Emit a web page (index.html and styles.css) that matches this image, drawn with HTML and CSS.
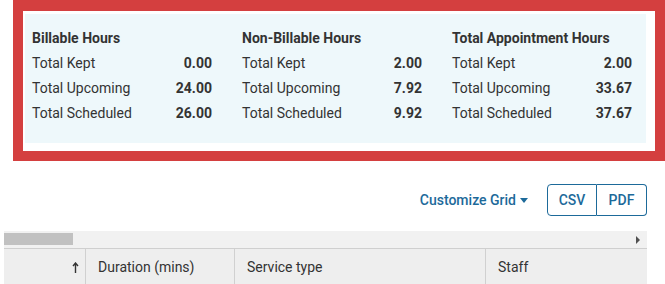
FILE: index.html
```html
<!DOCTYPE html>
<html>
<head>
<meta charset="utf-8">
<link rel="stylesheet" href="styles.css">
</head>
<body>
<div class="highlight">
  <div class="summary">
    <div class="col">
      <div class="head">Billable Hours</div>
      <div class="row"><span>Total Kept</span><b>0.00</b></div>
      <div class="row"><span>Total Upcoming</span><b>24.00</b></div>
      <div class="row"><span>Total Scheduled</span><b>26.00</b></div>
    </div>
    <div class="col">
      <div class="head">Non-Billable Hours</div>
      <div class="row"><span>Total Kept</span><b>2.00</b></div>
      <div class="row"><span>Total Upcoming</span><b>7.92</b></div>
      <div class="row"><span>Total Scheduled</span><b>9.92</b></div>
    </div>
    <div class="col">
      <div class="head">Total Appointment Hours</div>
      <div class="row"><span>Total Kept</span><b>2.00</b></div>
      <div class="row"><span>Total Upcoming</span><b>33.67</b></div>
      <div class="row"><span>Total Scheduled</span><b>37.67</b></div>
    </div>
  </div>
</div>
<div class="toolbar">
  <a class="customize">Customize Grid<span class="caret"></span></a>
  <div class="btn-group">
    <button class="btn">CSV</button>
    <button class="btn">PDF</button>
  </div>
</div>
<div class="grid">
  <div class="hscroll">
    <div class="thumb"></div>
    <div class="arrow"></div>
  </div>
  <div class="header">
    <div class="cell c0"><svg class="sort" width="7" height="11" viewBox="0 0 7 11"><path d="M3.5 1 L3.5 11 M1 4 L3.5 1 L6 4" fill="none" stroke="#333" stroke-width="1.4"/></svg></div>
    <div class="cell c1">Duration (mins)</div>
    <div class="cell c2">Service type</div>
    <div class="cell c3">Staff</div>
  </div>
</div>
</body>
</html>
```

FILE: styles.css
```css
* { box-sizing: border-box; }
html, body { margin: 0; padding: 0; background: #fff; }
body {
  font-family: Roboto, "Liberation Sans", sans-serif;
  font-size: 14px;
  color: #333;
  width: 665px;
  height: 284px;
  overflow: hidden;
}
.highlight {
  margin-left: 13px;
  width: 652px;
  border: 10px solid #d43f3f;
  border-top-width: 11px;
  border-bottom-width: 10px;
  padding: 3px 9px 8px 2px;
}
.summary {
  background: #eef8fb;
  display: grid;
  grid-template-columns: 180px 180px 180px;
  column-gap: 30px;
  padding: 12px 0 17px 7px;
}
.col { display: flex; flex-direction: column; }
.head {
  font-weight: 700;
  line-height: 25px;
  color: #333;
}
.row {
  display: flex;
  justify-content: space-between;
  line-height: 25px;
}
.row b { font-weight: 700; }
.toolbar {
  display: flex;
  justify-content: flex-end;
  align-items: center;
  margin-top: 23px;
  padding-right: 18px;
  gap: 19px;
}
.customize {
  color: #1d6a9a;
  font-weight: 500;
  display: flex;
  align-items: center;
}
.caret {
  display: inline-block;
  margin-left: 4px;
  width: 0;
  height: 0;
  border-left: 4px solid transparent;
  border-right: 4px solid transparent;
  border-top: 5px solid #1d6a9a;
  margin-top: 1px;
}
.btn-group { display: flex; }
.btn {
  font-family: inherit;
  font-size: 14px;
  font-weight: 500;
  color: #1d6a9a;
  background: #fff;
  border: 1px solid #1d6a9a;
  width: 50px;
  height: 32px;
  padding: 0;
}
.btn:first-child { border-radius: 4px 0 0 4px; }
.btn:last-child { border-radius: 0 4px 4px 0; border-left: none; width: 50px; }
.grid {
  margin: 15px 0 0 4px;
  width: 643px;
}
.hscroll {
  position: relative;
  height: 17px;
  background: #f1f1f1;
}
.thumb {
  position: absolute;
  left: 0;
  top: 2px;
  width: 69px;
  height: 12px;
  background: #c1c1c1;
}
.arrow {
  position: absolute;
  right: 7px;
  top: 5px;
  width: 0;
  height: 0;
  border-top: 4px solid transparent;
  border-bottom: 4px solid transparent;
  border-left: 4px solid #505050;
}
.header {
  display: flex;
  background: #eeeeee;
  border-top: 1px solid #cfcfcf;
  height: 40px;
}
.cell {
  display: flex;
  align-items: center;
  height: 36px;
  padding-left: 12px;
  color: #333;
  border-right: 1px solid #d0d0d0;
}
.c0 { width: 82px; justify-content: flex-end; padding-right: 6px; }
.c1 { width: 149px; }
.c2 { width: 251px; }
.c3 { flex: 1; border-right: none; }
```
